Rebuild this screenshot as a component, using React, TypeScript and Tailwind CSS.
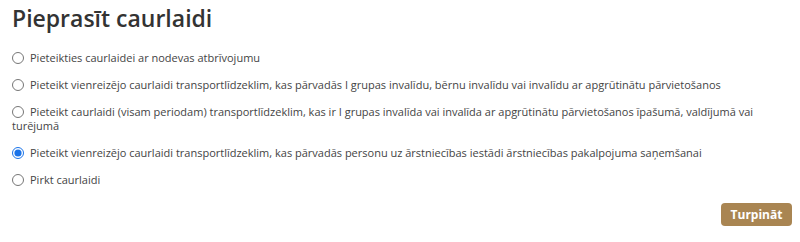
import { useState } from 'react';

const OPTIONS = [
  'Pieteikties caurlaidei ar nodevas atbrīvojumu',
  'Pieteikt vienreizējo caurlaidi transportlīdzeklim, kas pārvadās I grupas invalīdu, bērnu invalīdu vai invalīdu ar apgrūtinātu pārvietošanos',
  'Pieteikt caurlaidi (visam periodam) transportlīdzeklim, kas ir I grupas invalīda vai invalīda ar apgrūtinātu pārvietošanos īpašumā, valdījumā vai turējumā',
  'Pieteikt vienreizējo caurlaidi transportlīdzeklim, kas pārvadās personu uz ārstniecības iestādi ārstniecības pakalpojuma saņemšanai',
  'Pirkt caurlaidi',
];

export default function App() {
  const [selected, setSelected] = useState(3);

  return (
    <div className="w-[800px] h-[242px] bg-white pl-3 pr-2 pt-[2px] font-['Open_Sans',sans-serif] text-[#444]">
      <h1 className="text-[23px] leading-[32px] font-semibold text-[#333]">Pieprasīt caurlaidi</h1>
      <div className="mt-[17px] flex flex-col gap-[13px] pr-[30px]">
        {OPTIONS.map((label, i) => (
          <label key={i} className="block text-[11px] leading-[14px] cursor-pointer">
            <input
              type="radio"
              name="pass"
              checked={selected === i}
              onChange={() => setSelected(i)}
              className="mr-[6px] w-[12px] h-[12px] align-[-2px] accent-[#1a73e8]"
            />
            {label}
          </label>
        ))}
      </div>
      <div className="flex justify-end mt-[16px]">
        <button className="h-[23px] w-[71px] rounded-[4px] bg-[#a98552] text-white text-[12px] font-bold">
          Turpināt
        </button>
      </div>
    </div>
  );
}
